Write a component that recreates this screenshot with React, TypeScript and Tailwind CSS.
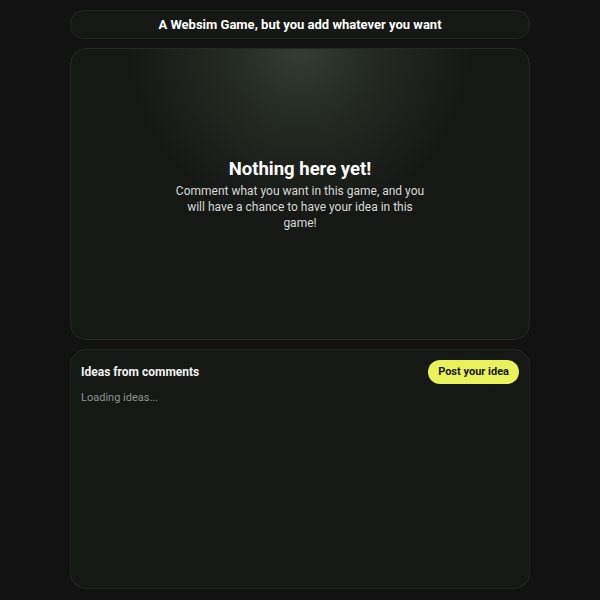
export default function App() {
  return (
    <div className="min-h-[600px] w-full bg-[#111211] font-['Roboto',sans-serif] text-white">
      <div className="mx-auto flex w-[460px] flex-col gap-[9px] pt-[10px]">
        <header className="flex h-[29px] items-center justify-center rounded-[13px] border border-[#222522] bg-[#161816]">
          <h1 className="text-[13px] font-bold">A Websim Game, but you add whatever you want</h1>
        </header>

        <main className="flex h-[292px] flex-col items-center justify-center rounded-[16px] border border-[#252925] bg-[radial-gradient(ellipse_170px_170px_at_50%_0%,#323d2f_0%,#222820_50%,#161816_100%)]">
          <h2 className="text-[18.5px] font-bold leading-[22px]">Nothing here yet!</h2>
          <p className="mt-[3px] w-[260px] text-center text-[12px] leading-[16px] text-[#d6d8d5]">
            Comment what you want in this game, and you will have a chance to have your idea in this game!
          </p>
        </main>

        <section className="h-[240px] rounded-[16px] border border-[#232723] bg-[#151815] px-[10px] pt-[10px]">
          <div className="flex items-center justify-between">
            <h3 className="text-[12px] font-bold text-[#f1f2f0]">Ideas from comments</h3>
            <button className="h-[24px] rounded-full bg-[#e8f35c] px-[10px] text-[11px] font-bold text-[#151515]">
              Post your idea
            </button>
          </div>
          <p className="mt-[6px] text-[11px] text-[#8f938e]">Loading ideas...</p>
        </section>
      </div>
    </div>
  );
}
